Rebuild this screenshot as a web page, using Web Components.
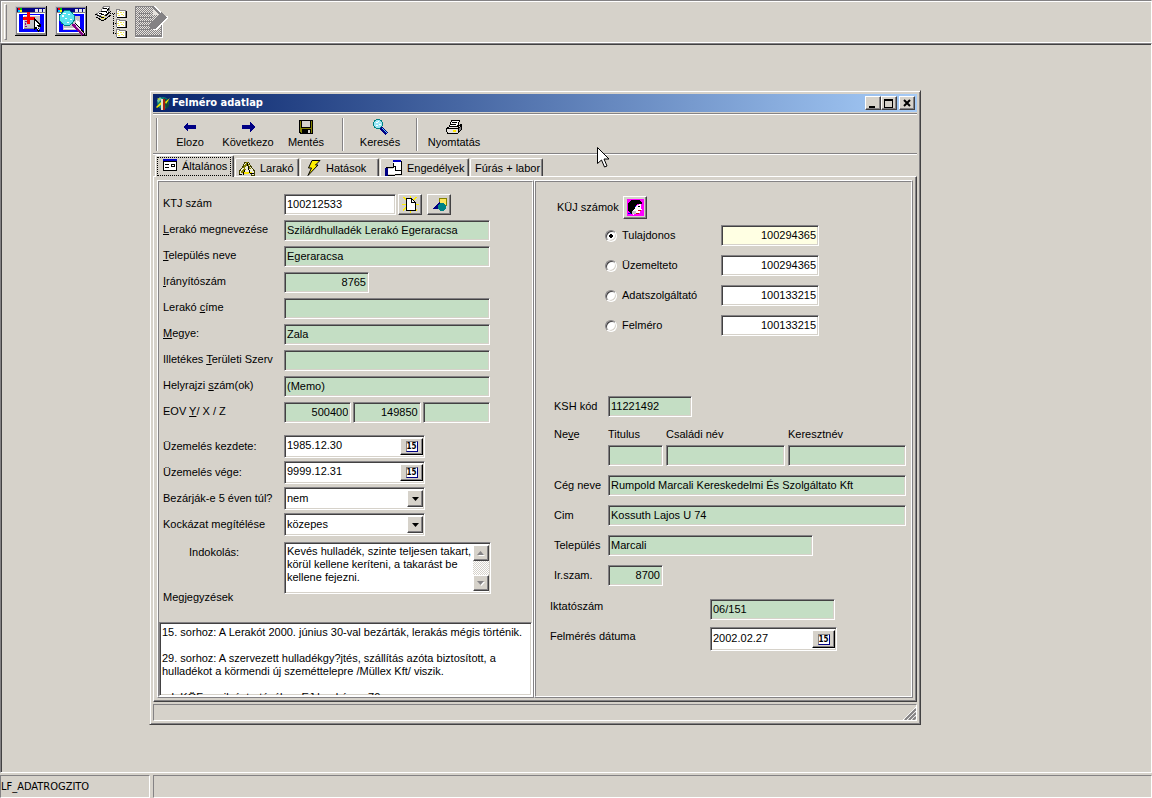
<!DOCTYPE html>
<html lang="hu">
<head>
<meta charset="utf-8">
<title>Felméro adatlap</title>
<style>
html{
  --face:#d6d2ca;--white:#fff;--gray:#848284;--dark:#424142;--green:#c4dec4;
  --ui:"Liberation Sans",Arial,sans-serif;
  --tahoma:"DejaVu Sans Condensed","DejaVu Sans",sans-serif;
}
body{margin:0;background:var(--face);font:11px/13px var(--ui);color:#000}
</style>
</head>
<body>
<app-shell></app-shell>
<script>
const ICONS = {
  newwin: `<svg width="32" height="32" shape-rendering="crispEdges"><path fill="#000" d="M0 0h32v30H0z"/><path fill="#c6c3c6" d="M0 0h31v29H0z"/><path fill="#848284" d="M1 1h30v28H1z"/><path fill="#000084" d="M2 2h28v4H2z"/><path fill="#f00" d="M3 2h2v2H3z"/><path fill="#0c0" d="M5 2h2v2H5z"/><path fill="#0cf" d="M3 4h2v2H3z"/><path fill="#ff0" d="M5 4h2v2H5z"/><path fill="#e7e7e7" d="M20 3h3v3h-3zM24 3h3v3h-3zM28 3h2v3h-2z"/><path fill="#fff" d="M2 7h28v20H2z"/><path fill="#00f" d="M4 8h25v18H4z"/><path fill="#fff" d="M8 9h17v14H8z"/><path fill="#c6c3c6" d="M9 10h16v13H9z"/><path fill="#848284" d="M9 22h14v1H9z"/><path fill="#840084" d="M10 15h2v1h-2zM10 17h1v2h-1zM10 20h2v1h-2z"/><path fill="#f00" d="M12 6h3v12h-3zM8 11h12v3H8z"/><path fill="#000" d="M19 12l7 7v2h-3l2 4-2 1-2-4-2 2z"/><path fill="#fff" d="M20 14l4 5h-2l2 5h-1l-2-4-1 1z"/></svg>`,
  search: `<svg width="32" height="32" shape-rendering="crispEdges"><path fill="#000" d="M0 0h32v30H0z"/><path fill="#c6c3c6" d="M0 0h31v29H0z"/><path fill="#848284" d="M1 1h30v28H1z"/><path fill="#000084" d="M2 2h28v4H2z"/><path fill="#f00" d="M3 2h2v2H3z"/><path fill="#0c0" d="M5 2h2v2H5z"/><path fill="#0cf" d="M3 4h2v2H3z"/><path fill="#ff0" d="M5 4h2v2H5z"/><path fill="#e7e7e7" d="M20 3h3v3h-3zM24 3h3v3h-3zM28 3h2v3h-2z"/><path fill="#fff" d="M2 7h28v20H2z"/><path fill="#00f" d="M4 8h25v18H4z"/><path fill="#c6c3c6" d="M8 10h17v14H8z"/><path fill="#fff" d="M9 22h12v1H9zM21 14l4 2v6l-4-4z"/><circle cx="12" cy="12" r="8" fill="#008284"/><circle cx="12" cy="12" r="7" fill="#5ae3ef"/><path fill="#fff" d="M8 7h3v1H8zM7 9h2v2H7zM13 8h2v1h-2zM10 12h2v1h-2zM15 13h2v1h-2zM12 16h2v1h-2z"/><path stroke="#000" stroke-width="4" d="M19 18l10 11"/><path stroke="#840084" stroke-width="3" d="M18 18l10 11"/><path stroke="#e7c6e7" d="M19 17l10 11"/></svg>`,
  tree: `<svg width="32" height="32" shape-rendering="crispEdges"><path fill="#fff" stroke="#848284" d="M1 8l5-3 3-5h5l1 2-2 5-5 4z"/><path fill="#c6c3c6" d="M0 9l7 3 9-7v3l-8 7-7-4z"/><path stroke="#000" fill="none" d="M0 8l8 4 8-7M1 11l7 4 8-6"/><path stroke="#000" d="M8 2l4 1M6 5l5 1M4 7l5 2M14 2l-3 5" fill="none"/><path fill="#efe75a" d="M7 10h3v1H7zM6 12h4v1H6z"/><path stroke="#000" stroke-dasharray="1 1" d="M18.500 8v20M15 7.500h6M18 17.500h4M18 27.500h4"/><g id="f"><path fill="#000" d="M22 11h9V5h1v7H22z"/><path fill="#848284" d="M21 3h4v1h6v7H21z"/><path fill="#fff" d="M22 4h2v1h6v6h-8z"/><path fill="#efe75a" d="M23 5h1v1h-1zM25 6h2v1h-2zM28 6h1v1h-1zM22 7h2v1h-2zM26 8h2v1h-2zM23 9h2v1h-2zM28 9h1v1h-1z"/></g><use href="#f" y="10"/><use href="#f" y="20"/></svg>`,
  note: `<svg width="33" height="32" shape-rendering="crispEdges"><defs><pattern id="d" width="2" height="2" patternUnits="userSpaceOnUse"><path fill="#848284" d="M0 0h2v2H0z"/><path fill="#e7e3de" d="M1 0h1v1h-1zM0 1h1v1H0z"/></pattern></defs><path fill="#fff" d="M0 0h20l8 8v24H0z"/><path fill="#848284" d="M0 0h18l9 9v22H0z"/><path fill="url(#d)" d="M1 1h17v8h8v20H1z"/><path fill="#e7e3de" d="M18 2l6 7h-6z"/><path fill="#848284" d="M4 7h12v1H4zM4 11h14v1H4zM4 15h13v1H4zM4 19h11v1H4zM4 23h11v1H4z"/><path fill="#fff" d="M31 10h2v2L22 24h-4v-2h3z"/><path fill="#848284" d="M26 6l6 5-11 12h-6v-4z"/></svg>`,
  app: `<svg width="16" height="16"><circle cx="8" cy="8" r="6" fill="#087b73"/><path fill="#104939" d="M9 3l4 2 1 6-3 3z"/><path fill="#73c3a5" d="M2 5l3-3 2 2-4 4z"/><path fill="#efe700" d="M1 12l5-5 1 2-5 4zM10 7l5-4-4 6zM2 3l3 1-1 1z"/><path fill="#e7dfc6" d="M6 4h3v11H6z"/><path fill="#a52010" d="M8 4h2v11H8z"/></svg>`,
  left: `<svg width="16" height="16" shape-rendering="crispEdges"><path fill="#000084" d="M1 8l5-5v3h8v4H6v3z"/></svg>`,
  right: `<svg width="16" height="16" shape-rendering="crispEdges"><path fill="#000084" d="M15 8l-5-5v3H2v4h8v3z"/></svg>`,
  save: `<svg width="16" height="16" shape-rendering="crispEdges"><path d="M1 1h14v14H2l-1-1z"/><path fill="#848200" d="M2 2h12v12H3l-1-1z"/><path d="M3 2h10v7H3zM4 10h9v4H4z"/><path fill="#d6d2ca" d="M4 2h8v6H4zM10 11h2v3h-2z"/></svg>`,
  find: `<svg width="16" height="16" shape-rendering="crispEdges"><circle cx="6" cy="5" r="5" fill="#008284"/><circle cx="6" cy="5" r="4" fill="#9ce7f7"/><path fill="#fff" d="M4 3h2v1H4zM7 5h2v1H7zM4 6h2v1H4zM6 2h1v1H6z"/><path stroke="#000084" stroke-width="3" d="M9 9l6 6"/><path stroke="#5acbff" d="M10 9l5 5"/></svg>`,
  print: `<svg width="17" height="16" shape-rendering="crispEdges"><path fill="#fff" stroke="#000" d="M5.500 1.500h8l-2 6h-8z"/><path stroke="#000" d="M6 3.500h5M5 5.500h5"/><path fill="#e7e3de" stroke="#000" d="M.5 9.500l3-2h8l4-2v5l-4 4H2l-1.500-2z"/><path stroke="#000" fill="none" d="M0 9.500h12l4-3M12 9v5"/><path fill="#848284" d="M13 9l2-1v2l-2 2z"/><path stroke="#ffe700" stroke-width="2" d="M7 12h3"/></svg>`,
  form: `<svg width="16" height="16" shape-rendering="crispEdges"><path d="M1 2h14v11H1z"/><path fill="#fff" d="M2 4h12v8H2z"/><path fill="#0000c6" d="M1 1h14v2H1z"/><path d="M3 6h4v1H3zM3 9h4v1H3zM9 6h4v3H9z"/><path fill="#fff" d="M10 7h2v1h-2z"/></svg>`,
  heap: `<svg width="18" height="16" shape-rendering="crispEdges"><path fill="#efebd6" stroke="#424100" d="M1.500 14v-3l4-5 1-4h4l2 4 4 5v4h-3l-1-3"/><path stroke="#848200" fill="none" stroke-width="2" d="M6 8l3-5 3 6M3 13l4-4"/><path stroke="#000" fill="none" d="M5 15l2-5M9 3l3 10h4M1 14h3"/><path fill="#ffe700" d="M6 12h5v2H6zM12 12h2v1h-2z"/></svg>`,
  bolt: `<svg width="16" height="16"><path fill="#ffef00" stroke="#000" d="M6 .5h8L9.500 5H12L2 15.500 5.500 8H2.500z"/></svg>`,
  hand: `<svg width="18" height="16" shape-rendering="crispEdges"><path fill="#fff" d="M8 2h8v12H8z"/><path stroke="#000" d="M16.500 1v13M8.500 3v4"/><path fill="#0000c6" d="M8 0h8v2H8z"/><path fill="#fff" d="M3 9h5l2-2v4h6v3H3z"/><path fill="none" stroke="#000" d="M1 7.500h6l3-1v4h6M3 15.500h6l2-1h6"/><path fill="#000084" d="M0 8h3v8H0z"/></svg>`,
  page: `<svg width="17" height="17" shape-rendering="crispEdges"><path stroke="#ffef00" d="M1 1l14 14M15 1L1 15M2 1l13 13M14 1L1 14M8.500 0v17M0 8.500h17"/><path fill="#fff" stroke="#000" d="M4.500 2.500h5l4 4v8h-9z"/><path fill="none" stroke="#000" d="M9.500 2v4h4"/></svg>`,
  shapes: `<svg width="17" height="17" shape-rendering="crispEdges"><path fill="#ffe75a" stroke="#848200" d="M8.500 2.500h7v7h-7z"/><path fill="#000084" d="M1 13l8-8v8z"/><circle cx="11" cy="11" r="4" fill="#008284"/></svg>`,
  face: `<svg width="17" height="17" shape-rendering="crispEdges"><path fill="#f0f" d="M0 0h17v17H0z"/><path d="M1 5l3-4h8l3 3-1 2-4-1-2 3-2 7H4L1 11z"/><path fill="#fff" d="M10 6l4-1v4l1 2h-2v3H9l-3 2-1-3 3-4z"/><path fill="#c6c3c6" d="M5 12h4v3H5z"/><path d="M11 7h2v1h-2z"/><path fill="#c61010" d="M11 11h3v1h-3zM9 14h3v1H9z"/><path fill="#00f" d="M1 14h3v1H1zM8 7h1v1H8z"/></svg>`
};

const BASE = `<style>
*{box-sizing:border-box}
button,input,select,textarea{font:inherit;color:inherit;margin:0;border-radius:0;outline:0}
svg{display:block;flex:none}
:host{display:block}
.btn{border:1px solid;border-color:var(--white) var(--dark) var(--dark) var(--white);box-shadow:inset -1px -1px var(--gray);background:var(--face);padding:0;display:flex;align-items:center;justify-content:center}
.box{border:1px solid;border-color:var(--gray) var(--white) var(--white) var(--gray);background:var(--bg,#fff);box-shadow:inset 1px 1px var(--dark),inset -1px -1px var(--face);height:21px;padding:1px 2px 3px;min-width:0;width:100%;display:block}
.right{text-align:right}
</style>`;

class Base extends HTMLElement {
  connectedCallback() {
    if (this.shadowRoot) return;
    this.attachShadow({ mode: 'open' }).innerHTML = BASE + this.view();
  }
  at(name, fallback = '') { return this.getAttribute(name) ?? fallback; }
}
const define = (name, view) => customElements.define(name, class extends Base {
  view() { return view(this); }
});
const mark = text => text.replace(/_(.)/g, '<u>$1</u>');

define('ui-icon', el => `${ICONS[el.at('name')]}`);

define('icon-button', el => `<style>
:host{flex:none;width:24px;height:var(--h,22px)}
.btn{width:100%;height:100%}
</style><button class="btn" type="button" aria-label="${el.at('label')}">${ICONS[el.at('icon')]}</button>`);

/* Labelled field: one or more text boxes, a date box or a drop-down list */
define('form-field', el => {
  const kind = el.at('kind', 'text');
  const label = el.at('label');
  const plain = label.replace('_', '');
  const right = el.hasAttribute('right') ? 'right' : '';
  let control;
  if (kind === 'date') {
    control = `<span class="box combo date"><input id="c" value="${el.at('value')}"><button class="cal" type="button" aria-label="Naptár"><span class="num">15</span></button></span>`;
  } else if (kind === 'select') {
    control = `<span class="box combo"><select id="c"><option>${el.at('value')}</option></select><span class="btn arrow" aria-hidden="true"><svg width="7" height="4"><path d="M0 0h7L3.500 4z"/></svg></span></span>`;
  } else {
    const values = el.at('value').split('|');
    control = values.map((v, i) => `<input class="box ${right}" ${i ? `aria-label="${plain} ${i + 1}"` : 'id="c"'} value="${v}">`).join('');
  }
  return `<style>
:host{display:grid;grid-template-columns:var(--label) minmax(0,1fr);align-items:var(--align,center)}
label{white-space:pre;padding-bottom:var(--lift,0)}
.area{display:flex;align-items:center;gap:var(--gap,2px)}
.main{display:flex;gap:2px;width:var(--w,100%)}
.combo{display:flex;height:var(--ch,23px);padding:2px 1px 2px 2px}
.combo input,.combo select{flex:1;min-width:0;border:0;background:none;padding:0;appearance:none}
.date input{padding-bottom:2px}
.arrow{width:16px;pointer-events:none}
.cal{width:23px;padding:0;border:1px solid;border-color:#fff #000 #000 #fff;background:var(--face);box-shadow:inset -1px -1px var(--gray);display:grid;place-items:center}
.num{background:#fff;border:1px solid var(--gray);border-right-color:#000084;border-bottom-color:#000084;font:bold 8px/9px var(--tahoma);width:12px;display:flex;justify-content:center}
</style><label for="c">${mark(label)}</label><div class="area"><div class="main">${control}</div><slot></slot></div>`;
});

define('name-fields', () => `<style>
:host{display:grid;grid-template-columns:51px 55px 119fr 118fr;gap:0 3px;grid-template-rows:19px 21px}
label,span{padding-top:2px}
.a{grid-column:2}
</style><span>Ne<u>v</u>e</span><label for="t">Titulus</label><label for="s">Családi név</label><label for="k">Keresztnév</label>
<input class="box a" id="t"><input class="box" id="s"><input class="box" id="k">`);

define('note-fields', () => `<style>
.top{display:grid;grid-template:auto auto/121px minmax(0,1fr);height:62px;padding:0 41px 0 4px;margin-top:6px}
.why{padding:4px 0 0 26px}
.rem{align-self:end}
.memo{grid-area:1/2/3/3;display:flex;height:52px;padding:2px 1px 2px 2px}
textarea{resize:none;overflow:hidden;line-height:13px}
.memo textarea{flex:1;min-width:0;border:0;background:none;padding:0;white-space:pre}
.bar{width:16px;display:flex;flex-direction:column;background:repeating-conic-gradient(#fff 0 25%,var(--face) 0 50%) 0 0/2px 2px}
.bar .btn{height:16px}
.gap{flex:1}
.all{height:74px;margin-top:18px;padding:3px 2px}
</style><div class="top"><label class="why" for="w">Indokolás:</label>
<div class="box memo"><textarea id="w">Kevés hulladék, szinte teljesen takart,
körül kellene keríteni, a takarást be
kellene fejezni.</textarea><div class="bar"><button class="btn" type="button" aria-label="Fel"><svg width="8" height="5"><path fill="#fff" d="M1 5h7L5 2z"/><path fill="#848284" d="M0 4h7L3.500 0z"/></svg></button><span class="gap"></span><button class="btn" type="button" aria-label="Le"><svg width="8" height="5"><path fill="#fff" d="M1 1h7L4.500 5z"/><path fill="#848284" d="M0 0h7L3.500 4z"/></svg></button></div></div>
<label class="rem" for="m">Megjegyzések</label></div>
<textarea class="box all" id="m">15. sorhoz: A Lerakót 2000. június 30-val bezárták, lerakás mégis történik.

29. sorhoz: A szervezett hulladékgy?jtés, szállítás azóta biztosított, a
hulladékot a körmendi új szeméttelepre /Müllex Kft/ viszik.

a I. KÖFe nyilvántartásában EJ lerakó ca. 70</textarea>`);

define('owner-list', () => `<style>
.head{display:flex;align-items:center;height:23px;margin-bottom:6px;--h:23px}
.head span{width:66px}
ul{list-style:none;margin:0;padding:0 0 0 48px;display:grid;gap:9px}
li{display:grid;grid-template-columns:17px 99px 98px;align-items:center}
.first{--bg:#ffffe3}
input[type=radio]{appearance:none;width:12px;height:12px;border-radius:50%;border:1px solid;border-color:var(--gray) #fff #fff var(--gray);background:#fff;box-shadow:inset 1px 1px var(--dark),inset -1px -1px var(--face)}
input[type=radio]:checked{background:radial-gradient(circle,#000 0 2px,#fff 2px)}
</style><div class="head"><span>KÜJ számok</span><icon-button icon="face" label="Ügyfél"></icon-button></div><ul>${
  [['Tulajdonos', '100294365'], ['Üzemelteto', '100294365'], ['Adatszolgáltató', '100133215'], ['Felméro', '100133215']]
    .map(([n, v], i) => `<li class="${i ? '' : 'first'}"><input type="radio" name="o" id="r${i}" ${i ? '' : 'checked'}><label for="r${i}">${n}</label><input class="box right" aria-label="${n} száma" value="${v}"></li>`).join('')
}</ul>`);

define('bevel-panel', () => `<style>
:host{border:1px solid;border-color:var(--white) var(--gray) var(--gray) var(--white);min-width:0}
.in{border:1px solid;border-color:var(--gray) var(--white) var(--white) var(--gray);height:100%}
</style><div class="in"><slot></slot></div>`);

define('tool-button', el => `<style>
button{width:58px;height:36px;border:0;background:none;padding:3px 0 0;display:flex;flex-direction:column;align-items:center;gap:1px;line-height:13px;white-space:nowrap}
</style><button type="button">${ICONS[el.at('icon')]}<slot></slot></button>`);

define('tool-sep', () => `<style>:host{width:2px;height:33px;margin:2px 7px 0;border-left:1px solid var(--gray);border-right:1px solid #fff;flex:none}</style>`);

define('tab-button', el => `<style>
:host{flex:none}
button{width:100%;height:18px;border:1px solid;border-width:1px 1px 0;border-color:#fff var(--dark) #fff #fff;box-shadow:inset -1px 0 var(--gray);background:var(--face);border-radius:2px 2px 0 0;padding:1px 0 0 var(--pad,5px);display:flex;align-items:center;gap:4px;white-space:nowrap}
.on{height:22px;margin-bottom:-1px;position:relative;padding-top:0;padding-bottom:1px}
.on::after{content:"";position:absolute;inset:1px 2px 1px 1px;border:1px dotted #000}
</style><button type="button" role="tab" class="${el.hasAttribute('on') ? 'on' : ''}" aria-selected="${el.hasAttribute('on')}">${ICONS[el.at('icon')] || ''}<slot></slot></button>`);

define('survey-window', () => `<style>
:host{background:var(--face);border:1px solid;border-color:var(--face) var(--dark) var(--dark) var(--face);box-shadow:inset 1px 1px #fff,inset -1px -1px var(--gray);padding:3px}
header{display:flex;align-items:center;height:18px;padding:0 2px;background:linear-gradient(90deg,#08246b,#a5cbf7);color:#fff}
h1{font:bold 11px/18px var(--tahoma);margin:0 auto 0 1px}
.cap{width:16px;height:14px;color:#000}
.close{margin-left:2px}
nav{display:flex;margin-top:1px;height:42px;border:solid;border-width:1px 0;border-color:var(--gray) transparent #fff;box-shadow:inset 0 1px #fff,inset 0 -1px var(--gray);padding:2px 0 0}
nav tool-sep:first-child{margin:2px 3px 0}
.tabs{display:flex;align-items:flex-end;height:21px;padding-left:2px;gap:1px}
.page{border:1px solid;border-color:#fff var(--dark) var(--dark) #fff;box-shadow:inset -1px -1px var(--gray);padding:3px;display:grid;grid-template-columns:377fr 379fr}
.a{padding:12px 42px 0 4px;display:grid;gap:5px;--label:121px;--lift:2px}
.green{--bg:var(--green)}
.b{padding:12px 41px 0 4px;display:grid;gap:3px;--label:121px;--w:141px}
.o{padding:14px 0 0 21px}
.c{padding:60px 5px 0 18px;display:grid;gap:9px;--label:54px}
.d{padding:13px 5px 0 14px;display:grid;gap:7px;--label:160px;--lift:6px}
footer{margin-top:2px;height:17px;border:1px solid;border-color:var(--gray) #fff #fff var(--gray);display:flex;justify-content:flex-end;align-items:flex-end}
</style>
<header><ui-icon name="app"></ui-icon><h1>Felméro adatlap</h1>
<button class="btn cap" type="button" aria-label="Kis méret"><svg width="10" height="9"><path d="M1 7h6v2H1z"/></svg></button>
<button class="btn cap" type="button" aria-label="Teljes méret"><svg width="10" height="9" shape-rendering="crispEdges"><path fill-rule="evenodd" d="M0 0h9v9H0zM1 2v6h7V2z"/></svg></button>
<button class="btn cap close" type="button" aria-label="Bezárás"><svg width="9" height="8"><path stroke="#000" stroke-width="2" d="M1 1l6 6M7 1L1 7"/></svg></button></header>
<nav aria-label="Eszköztár"><tool-sep></tool-sep><tool-button icon="left">Elozo</tool-button><tool-button icon="right">Következo</tool-button><tool-button icon="save">Mentés</tool-button><tool-sep></tool-sep><tool-button icon="find">Keresés</tool-button><tool-sep></tool-sep><tool-button icon="print">Nyomtatás</tool-button></nav>
<div class="tabs">
<tab-button on icon="form" style="width:79px;--pad:6px">Általános</tab-button><tab-button icon="heap" style="width:64px;--pad:2px">Larakó</tab-button><tab-button icon="bolt" style="width:79px">Hatások</tab-button><tab-button icon="hand" style="width:89px;--pad:4px">Engedélyek</tab-button><tab-button style="width:73px;--pad:4px">Fúrás + labor</tab-button></div>
<div class="page"><bevel-panel>
<div class="a green">
<form-field label="KTJ szám" value="100212533" style="--bg:#fff;--w:112px;--h:21px"><icon-button icon="page" label="Új"></icon-button><icon-button icon="shapes" label="Térkép" style="margin-left:3px"></icon-button></form-field>
<form-field label="_Lerakó megnevezése" value="Szilárdhulladék Lerakó Egeraracsa"></form-field>
<form-field label="_Település neve" value="Egeraracsa"></form-field>
<form-field label="_Irányítószám" value="8765" right style="--w:85px"></form-field>
<form-field label="Lerakó _címe"></form-field>
<form-field label="_Megye:" value="Zala"></form-field>
<form-field label="Illetékes _Területi Szerv"></form-field>
<form-field label="Helyrajzi _szám(ok)" value="(Memo)"></form-field>
<form-field label="EOV _Y/ X / Z" value="500400|149850|" right></form-field>
</div>
<div class="b">
<form-field kind="date" label="Üzemelés kezdete:" value="1985.12.30"></form-field>
<form-field kind="date" label="Üzemelés vége:" value="9999.12.31"></form-field>
<form-field kind="select" label="Bezárják-e 5 éven túl?" value="nem"></form-field>
<form-field kind="select" label="Kockázat megítélése" value="közepes"></form-field>
</div>
<note-fields></note-fields>
</bevel-panel><bevel-panel>
<div class="o"><owner-list></owner-list></div>
<div class="c green">
<form-field label="KSH kód" value="11221492" style="--w:84px"></form-field>
<name-fields></name-fields>
<form-field label="Cég neve" value="Rumpold Marcali Kereskedelmi És Szolgáltato Kft"></form-field>
<form-field label="Cim" value="Kossuth Lajos U 74"></form-field>
<form-field label="Település" value="Marcali" style="--w:205px"></form-field>
<form-field label="Ir.szam." value="8700" right style="--w:55px"></form-field>
</div>
<div class="d">
<form-field class="green" label="Iktatószám" value="06/151" style="--w:125px"></form-field>
<form-field kind="date" label="Felmérés dátuma" value="2002.02.27" style="--w:127px;--ch:24px"></form-field>
</div>
</bevel-panel></div>
<footer><svg width="13" height="13"><path stroke="#fff" d="M0 13L13 0M4 13l9-9M8 13l5-5"/><path stroke="#848284" stroke-width="2" d="M2 13L13 2M6 13l7-7M10 13l3-3"/></svg></footer>`);

define('app-shell', () => `<style>
:host{display:flex;flex-direction:column;min-height:100vh}
.bar{display:flex;align-items:flex-start;gap:8px;height:43px;border:1px solid;border-color:var(--gray) #fff #fff var(--gray);box-shadow:inset 1px 1px #fff;padding:4px 3px}
.grip{width:3px;height:36px;border:1px solid;border-color:#fff var(--gray) var(--gray) #fff;margin-top:-1px}
.bar button{border:0;background:none;padding:0;height:32px;margin-top:1px}
.desk{flex:1;border:1px solid;border-color:var(--gray) #fff #fff var(--gray);box-shadow:inset 1px 1px var(--dark);padding:46px 230px 47px 148px;position:relative}
.status{display:flex;gap:3px;padding-top:2px;height:25px;font-family:var(--tahoma)}
.status div{border:1px solid;border-color:var(--gray) #fff #fff var(--gray);line-height:21px;width:150px}
.status .rest{flex:1}
.cursor{position:absolute;left:596px;top:103px}
</style>
<div class="bar"><span class="grip"></span>
<button type="button" aria-label="Új adatlap">${ICONS.newwin}</button><button type="button" aria-label="Adatlap keresése">${ICONS.search}</button><button type="button" aria-label="Fastruktúra">${ICONS.tree}</button><button type="button" aria-label="Szerkesztés" disabled>${ICONS.note}</button></div>
<main class="desk"><survey-window></survey-window>
<svg class="cursor" width="12" height="21" viewBox="0 0 12 21"><path fill="#fff" stroke="#000" d="M.5.500v16l4-3.500 3 7 2.500-1-3-7h5z"/></svg></main>
<div class="status"><div>LF_ADATROGZITO</div><div class="rest"></div></div>`);
</script>
</body>
</html>
